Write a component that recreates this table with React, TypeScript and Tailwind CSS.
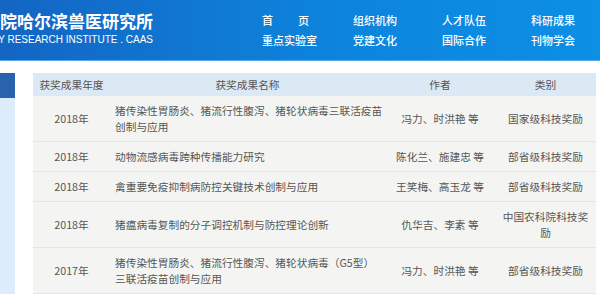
import React from 'react'

const navTop = ['组织机构', '人才队伍', '科研成果']
const navBottom = ['重点实验室', '党建文化', '国际合作', '刊物学会']

const rows = [
    { year: '2018年', name: ['猪传染性胃肠炎、猪流行性腹泻、猪轮状病毒三联活疫苗', '创制与应用'], author: '冯力、时洪艳 等', type: ['国家级科技奖励'] },
    { year: '2018年', name: ['动物流感病毒跨种传播能力研究'], author: '陈化兰、施建忠 等', type: ['部省级科技奖励'] },
    { year: '2018年', name: ['禽重要免疫抑制病防控关键技术创制与应用'], author: '王笑梅、高玉龙 等', type: ['部省级科技奖励'] },
    { year: '2018年', name: ['猪瘟病毒复制的分子调控机制与防控理论创新'], author: '仇华吉、李素 等', type: ['中国农科院科技奖', '励'] },
    { year: '2017年', name: ['猪传染性胃肠炎、猪流行性腹泻、猪轮状病毒（G5型）', '三联活疫苗创制与应用'], author: '冯力、时洪艳 等', type: ['部省级科技奖励'] },
]

const cols = 'grid grid-cols-[77px_275px_110px_101px]'

export default function App() {
    return (
        <div className="w-[600px] h-[294px] overflow-hidden bg-white" style={{ fontFamily: '"Noto Sans CJK SC", "Noto Sans", sans-serif' }}>
            {/* header */}
            <div className="h-[61px] border-b border-[#58a9e8] bg-[linear-gradient(to_right,#1465c4,#0d84dc_55%,#0c8fe6)] flex">
                <div className="w-[153px] overflow-hidden flex flex-col items-end pt-[11px] text-white">
                    <div className="whitespace-nowrap text-[17px] leading-[20px] font-bold tracking-[0px]">中国农业科学院哈尔滨兽医研究所</div>
                    <div className="whitespace-nowrap text-[10px] leading-[12px] mt-[3px]" style={{ fontFamily: '"Liberation Sans", Arial, sans-serif' }}>
                        HARBIN VETERINARY RESEARCH INSTITUTE . CAAS
                    </div>
                </div>
                <div className="ml-[109px] pt-[10px] text-white text-[11px] leading-[20px] font-medium">
                    <div className="grid grid-cols-[91px_89px_89px_60px]">
                        <div className="w-[47px] flex justify-between"><span>首</span><span>页</span></div>
                        {navTop.map((t) => (
                            <div key={t}>{t}</div>
                        ))}
                        {navBottom.map((t) => (
                            <div key={t}>{t}</div>
                        ))}
                    </div>
                </div>
            </div>

            {/* body */}
            <div className="flex pt-[12px]">
                <div className="w-[15px] flex flex-col h-[221px]">
                    <div className="h-[25px] bg-[#2a62ad]"></div>
                    <div className="flex-1 bg-[#dcecfb]"></div>
                </div>

                <div className="ml-[18px] w-[563px] text-[10.7px] text-[#555]">
                    <div className={`${cols} h-[23px] items-center bg-[#dbe9f5] leading-[16px]`}>
                        <div className="text-center">获奖成果年度</div>
                        <div className="text-center">获奖成果名称</div>
                        <div className="text-center">作者</div>
                        <div className="text-center">类别</div>
                    </div>
                    {rows.map((r, i) => (
                        <div
                            key={i}
                            className={`${cols} items-center bg-[#f4f5f2] border-b border-[#e4e6e2] leading-[16px] ${r.name.length > 1 || r.type.length > 1 ? 'h-[46px]' : 'h-[30px]'}`}
                        >
                            <div className="text-center">{r.year}</div>
                            <div className="pl-[5px] whitespace-nowrap">
                                {r.name.map((l, j) => (
                                    <div key={j}>{l}</div>
                                ))}
                            </div>
                            <div className="text-center whitespace-nowrap">{r.author}</div>
                            <div className="text-center whitespace-nowrap">
                                {r.type.map((l, j) => (
                                    <div key={j}>{l}</div>
                                ))}
                            </div>
                        </div>
                    ))}
                </div>
            </div>
        </div>
    )
}
